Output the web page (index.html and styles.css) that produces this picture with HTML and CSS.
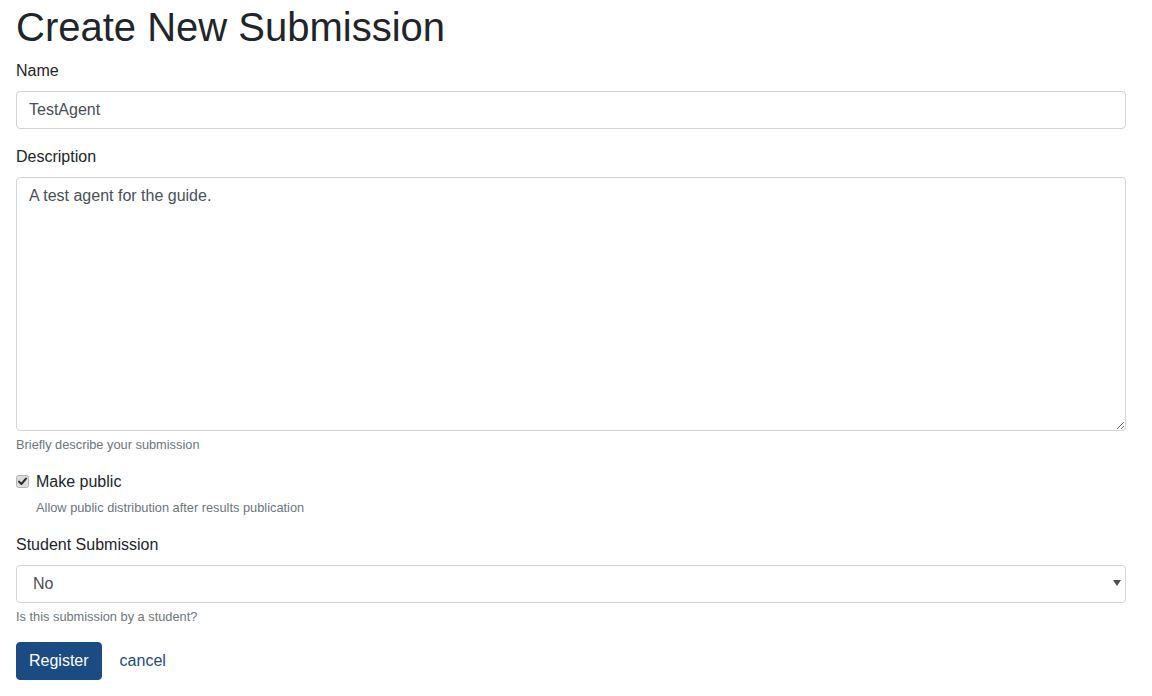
FILE: index.html
```html
<!DOCTYPE html>
<html lang="en">
<head>
<meta charset="utf-8">
<title>Create New Submission</title>
<link rel="stylesheet" href="styles.css">
</head>
<body>
<main class="container">
  <h1 class="title">Create New Submission</h1>
  <form class="form">
    <div class="form-group">
      <label class="label" for="name">Name</label>
      <input class="form-control" id="name" type="text" value="TestAgent">
    </div>
    <div class="form-group">
      <label class="label" for="desc">Description</label>
      <textarea class="form-control textarea" id="desc" rows="10">A test agent for the guide.</textarea>
      <small class="form-text">Briefly describe your submission</small>
    </div>
    <div class="form-group form-check">
      <div class="check-row">
        <span class="check-box">
          <svg width="13" height="13" viewBox="0 0 13 13"><rect x="0.5" y="0.5" width="12" height="12" rx="2" fill="#dcdcdc" stroke="#b4b4b4"/><path d="M3 6.6 L5.4 9 L10 3.6" fill="none" stroke="#2b2b2b" stroke-width="2" stroke-linecap="round" stroke-linejoin="round"/></svg>
        </span>
        <span class="check-label">Make public</span>
      </div>
      <small class="form-text indent">Allow public distribution after results publication</small>
    </div>
    <div class="form-group">
      <label class="label" for="student">Student Submission</label>
      <div class="select-wrap">
        <select class="form-control select" id="student">
          <option>No</option>
          <option>Yes</option>
        </select>
        <span class="select-arrow"></span>
      </div>
      <small class="form-text">Is this submission by a student?</small>
    </div>
    <div class="actions">
      <button class="btn btn-primary" type="button">Register</button>
      <a class="btn btn-link" href="#">cancel</a>
    </div>
  </form>
</main>
</body>
</html>
```

FILE: styles.css
```css
* { box-sizing: border-box; }

html, body {
  margin: 0;
  padding: 0;
  background: #fff;
}

body {
  font-family: "Liberation Sans", Arial, Helvetica, sans-serif;
  font-size: 16px;
  line-height: 1.5;
  color: #212529;
}

.container {
  width: 1126px;
  padding: 3px 0 0 16px;
}

.title {
  margin: 0 0 8px 0;
  font-size: 40px;
  font-weight: 400;
  line-height: 1.2;
  color: #212529;
}

.form { margin: 0; }

.form-group {
  margin-bottom: 16px;
}

.label {
  display: block;
  margin-bottom: 8px;
}

.form-control {
  display: block;
  width: 100%;
  height: 38px;
  padding: 6px 12px;
  font-family: inherit;
  font-size: 16px;
  line-height: 1.5;
  color: #495057;
  background: #fff;
  border: 1px solid #ced4da;
  border-radius: 4px;
  margin: 0;
  outline: none;
}

.textarea {
  height: 254px;
  resize: vertical;
}

.form-text {
  display: block;
  margin-top: 4px;
  font-size: 12.8px;
  line-height: 19px;
  color: #6c757d;
}

.indent { padding-left: 20px; }

.check-row {
  display: flex;
  align-items: flex-start;
}

.check-box {
  width: 20px;
  flex: none;
  padding-top: 5px;
  line-height: 0;
}

.check-box svg { display: block; }

.check-label { line-height: 24px; }

.select-wrap {
  position: relative;
}

.select {
  appearance: none;
  -webkit-appearance: none;
  padding-left: 16px;
}

.select-arrow {
  position: absolute;
  right: 5px;
  top: 15px;
  width: 0;
  height: 0;
  border-left: 4px solid transparent;
  border-right: 4px solid transparent;
  border-top: 6px solid #4a4d52;
  pointer-events: none;
}

.actions {
  display: flex;
  align-items: center;
  gap: 5px;
}

.btn {
  display: inline-block;
  height: 38px;
  padding: 6px 12px;
  font-family: inherit;
  font-size: 16px;
  line-height: 1.5;
  border: 1px solid transparent;
  border-radius: 4px;
  text-decoration: none;
  cursor: pointer;
}

.btn-primary {
  background: #1a4b82;
  border-color: #1a4b82;
  color: #fff;
}

.btn-link {
  color: #1a4b82;
  background: transparent;
}
```
